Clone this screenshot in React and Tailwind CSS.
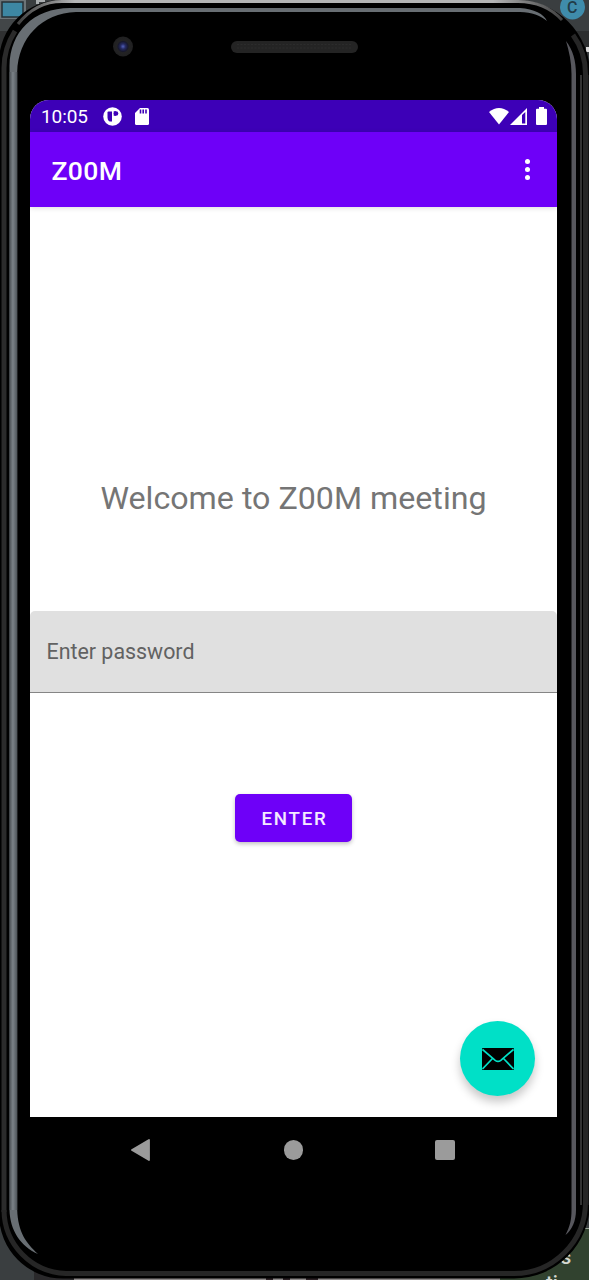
import React from "react";

function Backdrop() {
  return (
    <svg className="absolute inset-0 h-full w-full" viewBox="0 0 589 1280" fill="none" aria-hidden="true">
      <rect width="589" height="1280" fill="#3a3e40" />
      <rect y="0" width="26" height="19" fill="#6c7478" />
      <rect x="2" y="2" width="21" height="15" fill="#3d87a3" stroke="#263036" strokeWidth="1.5" />
      <rect y="19" width="30" height="12" fill="#424648" />
      <rect y="31" width="20" height="30" fill="#303132" />
      <path d="M36 0h9v2h-6v2h-3z" fill="#a9adaf" />
      <rect x="560" y="31" width="29" height="18" fill="#2c2e2f" />
      <rect x="586" y="47" width="3" height="5" fill="#d8d8d8" />
      <rect x="34" y="1230" width="40" height="50" fill="#2a292b" />
      <rect x="74" y="1278" width="460" height="2" fill="#8d8989" />
      <path d="M266 1278h7v2h-7zM283 1278h7v2h-7zM306 1278h12v2h-12z" fill="#2b2024" />
      <rect x="500" y="1228" width="89" height="52" fill="#31422f" />
      <path d="M580 1228.5h9" stroke="#9aa598" />
      <text x="560.5" y="1264" className="font-['Roboto'] text-[21px] font-medium" fill="#d4d8d2">s</text>
      <text x="546" y="1290" className="font-['Roboto'] text-[20px] font-medium" fill="#d4d8d2">ti</text>
    </svg>
  );
}

function DeviceBody() {
  return (
    <svg className="absolute inset-0 h-full w-full" viewBox="0 0 589 1280" fill="none" aria-hidden="true">
      <defs>
        <linearGradient id="steel" x1="9" x2="17.5" y1="0" y2="0" gradientUnits="userSpaceOnUse">
          <stop offset="0" stopColor="#42474b" />
          <stop offset="0.45" stopColor="#7b8288" />
          <stop offset="1" stopColor="#4b5156" />
        </linearGradient>
        <linearGradient id="topEdge" x1="20" x2="570" y1="0" y2="0" gradientUnits="userSpaceOnUse">
          <stop offset="0" stopColor="#444" />
          <stop offset="0.1" stopColor="#b4b5b6" />
          <stop offset="0.86" stopColor="#b4b5b6" />
          <stop offset="1" stopColor="#333" />
        </linearGradient>
        <radialGradient id="lens">
          <stop offset="0" stopColor="#5260b8" />
          <stop offset="0.25" stopColor="#252a62" />
          <stop offset="0.5" stopColor="#17182c" />
          <stop offset="0.62" stopColor="#232324" />
          <stop offset="1" stopColor="#202021" />
        </radialGradient>
      </defs>
      <path d="M-1 62A62 62 0 0 1 61 0H516A74 74 0 0 1 590 74V1202A76 76 0 0 1 514 1278.500H63A64 64 0 0 1 -1 1214.500Z" fill="#000" />
      <path d="M4 1212V68C4 55 8 42 15 31" stroke="#2b2b2b" strokeWidth="5" />
      <path d="M4 1210A64 64 0 0 0 66 1273.500H514A71.500 71.500 0 0 0 585.500 1202V74C585.500 60 581 46 573 35" stroke="#262626" strokeWidth="5" />
      <path d="M18 24C30 9 44 1.500 62 1.500H518C538 1.500 551 8 562 20" stroke="url(#topEdge)" strokeWidth="3" />
      <path d="M9.500 1210V66C10 32 33 8.500 70 8H520C534 9 544 14 547 21C540 15 532 12.500 520 12H76C42 13 18 38 17.200 72V1210C18 1232 26 1243 38 1254C20 1246 10 1230 9.500 1210Z" fill="#686e73" />
      <path d="M9.500 1210V72H17.200V1210Z" fill="url(#steel)" />
      <path d="M566 41C573 50 576 61 576 74V1210C576 1221 572 1230 565.500 1235C570 1226 571.500 1220 571.500 1210V74C571.500 62 569 51 566 41Z" fill="#57575d" />
      <path d="M581 75V1205" stroke="#454545" strokeWidth="1.500" />
      <path d="M588.500 75V1205" stroke="#151515" />
      <circle cx="123" cy="46.500" r="10" fill="url(#lens)" />
      <rect x="231" y="41" width="127" height="12" rx="6" fill="#242424" />
      <path d="M237 44.500H352M237 48H352" stroke="#2c2c2c" strokeDasharray="2 1.500" />
      <circle cx="572.500" cy="7" r="12.500" fill="#3f8cab" />
      <text x="567" y="13" className="font-['Roboto'] text-[16px] font-medium" fill="#223c48">C</text>
    </svg>
  );
}

function StatusBar() {
  return (
    <div className="flex h-8 shrink-0 items-center bg-[#3d00b7] pl-[11px] pr-[10px] text-white">
      <span className="w-[62px] pt-[2px] text-[19px] leading-8 tracking-[-0.1px]">10:05</span>
      <svg className="size-[19px]" viewBox="0 0 19 19">
        <circle cx="9.500" cy="9.500" r="9.300" fill="#fff" />
        <path d="M5.500 4.500H9V14.500H7.500C5 14.500 4.500 12 4.500 9.500V5.500Q4.500 4.500 5.500 4.500Z" fill="#3d00b7" />
        <circle cx="13" cy="6.500" r="2.300" fill="#3d00b7" />
        <path d="M10.700 4.200H13V8.800H10.700Z" fill="#3d00b7" />
      </svg>
      <svg className="ml-[13px] h-[17px] w-[14px]" viewBox="0 0 14 17">
        <path d="M5 0H12.500Q14 0 14 1.500V15.500Q14 17 12.500 17H1.500Q0 17 0 15.500V5Z" fill="#fff" />
        <path d="M5.500 1.500V5.500M8.200 1.500V5.500M11 1.500V5.500" stroke="#3d00b7" strokeWidth="1.600" />
      </svg>
      <svg className="ml-auto h-[17px] w-5" viewBox="0 0 20 17">
        <path d="M0 4Q10 -4 20 4L10 16.500Z" fill="#fff" />
      </svg>
      <svg className="ml-px h-[17px] w-[17px]" viewBox="0 0 17 17">
        <path fillRule="evenodd" d="M0 17L17 0V17ZM12 7V15.500H15.300V4Z" fill="#fff" />
      </svg>
      <svg className="ml-[9.500px] h-[18px] w-[11px]" viewBox="0 0 11 18">
        <path d="M3 0H8V1.700H10Q11 1.700 11 2.700V17Q11 18 10 18H1Q0 18 0 17V2.700Q0 1.700 1 1.700H3Z" fill="#fff" />
      </svg>
    </div>
  );
}

function AppBar() {
  return (
    <header className="flex h-[75px] shrink-0 items-center justify-between bg-[#6e00f8] pl-[21.500px] pr-[27px] text-white shadow-[0_1px_5px_rgba(0,0,0,0.14)]">
      <h1 className="pt-[3px] text-[26.500px] font-medium leading-8 tracking-[0.350px]">Z00M</h1>
      <button className="flex flex-col gap-[2.500px]" aria-label="More options">
        <span className="size-[5.500px] rounded-full bg-white" />
        <span className="size-[5.500px] rounded-full bg-white" />
        <span className="size-[5.500px] rounded-full bg-white" />
      </button>
    </header>
  );
}

function NavBar() {
  return (
    <nav className="flex h-[66px] items-center justify-between pl-[130px] pr-[134px]">
      <svg className="h-[22px] w-5" viewBox="0 0 20 22">
        <path d="M19 1L2 11L19 21Z" fill="#9b9b9b" stroke="#9b9b9b" strokeWidth="1.800" strokeLinejoin="round" />
      </svg>
      <span className="ml-[2px] size-[19.500px] rounded-full bg-[#9b9b9b]" />
      <span className="size-5 rounded-[2px] bg-[#9b9b9b]" />
    </nav>
  );
}

export default function App() {
  return (
    <div className="relative h-[1280px] w-[589px] overflow-hidden font-['Roboto',sans-serif]">
      <Backdrop />
      <DeviceBody />
      <div className="relative pt-[100px]">
        <div className="ml-[30px] flex h-[1017px] w-[527px] flex-col overflow-hidden rounded-t-[19px] bg-white">
          <StatusBar />
          <AppBar />
          <main className="relative flex flex-1 flex-col items-center">
            <p className="mt-[271px] whitespace-nowrap text-[32.200px] leading-10 text-[#757575]">Welcome to Z00M meeting</p>
            <div className="mt-[93px] flex h-[82px] w-full items-center rounded-t-[5px] border-b-[1.500px] border-[#858585] bg-[#e0e0e0] px-[16.500px] pt-px text-[21.400px] text-[#626262]">
              Enter password
            </div>
            <button className="mt-[101px] flex h-12 w-[117.500px] items-center justify-center rounded-[5px] bg-[#6e00f8] pl-[2px] pt-[2px] text-[18.700px] font-medium tracking-[1.700px] text-[#f5eaff] shadow-[0_2px_4px_rgba(0,0,0,0.25)]">
              ENTER
            </button>
            <button aria-label="Mail" className="absolute bottom-[21px] right-[22px] flex size-[75px] items-center justify-center rounded-full bg-[#00e0c7] shadow-[0_6px_10px_rgba(0,0,0,0.22)]">
              <svg className="h-[22px] w-8" viewBox="0 0 32 22">
                <rect width="32" height="22" rx="0.800" fill="#000" />
                <path d="M0.500 1.500L13.200 12.300Q16 14.500 18.800 12.300L31.500 1.500M0.500 21L10.500 10.500M31.500 21L21.500 10.500" stroke="#00e0c7" strokeWidth="1.700" fill="none" />
              </svg>
            </button>
          </main>
        </div>
        <NavBar />
      </div>
    </div>
  );
}
